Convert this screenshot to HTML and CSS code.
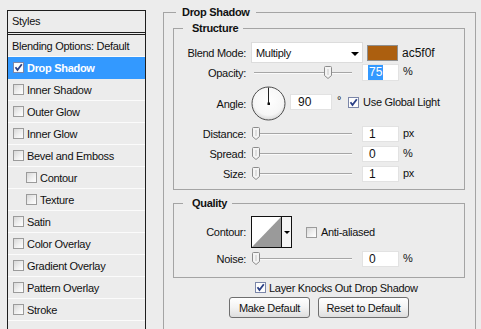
FILE: index.html
```html
<!DOCTYPE html>
<html>
<head>
<meta charset="utf-8">
<link rel="stylesheet" href="styles.css">
</head>
<body>
<div class="app">
  <div class="styles-panel">
    <div class="panel-header">Styles</div>
    <ul class="style-list">
      <li class="item plain">Blending Options: Default</li>
      <li class="item selected"><span class="cb checked"><svg viewBox="0 0 11 11" width="11" height="11"><path d="M2.5 5.2 L4.5 8 L8.8 2.2" fill="none" stroke="#2a3f86" stroke-width="1.8"/></svg></span>Drop Shadow</li>
      <li class="item"><span class="cb"></span>Inner Shadow</li>
      <li class="item"><span class="cb"></span>Outer Glow</li>
      <li class="item"><span class="cb"></span>Inner Glow</li>
      <li class="item"><span class="cb"></span>Bevel and Emboss</li>
      <li class="item sub"><span class="cb"></span>Contour</li>
      <li class="item sub"><span class="cb"></span>Texture</li>
      <li class="item"><span class="cb"></span>Satin</li>
      <li class="item"><span class="cb"></span>Color Overlay</li>
      <li class="item"><span class="cb"></span>Gradient Overlay</li>
      <li class="item"><span class="cb"></span>Pattern Overlay</li>
      <li class="item"><span class="cb"></span>Stroke</li>
    </ul>
  </div>

  <div class="main">
    <fieldset class="group outer">
      <legend class="outer-legend">Drop Shadow</legend>

      <fieldset class="group structure">
        <legend class="sub-legend">Structure</legend>

        <div class="row row-blend">
          <span class="label">Blend Mode:</span>
          <div class="select">
            <span class="select-text">Multiply</span>
            <span class="arrow"></span>
          </div>
          <span class="swatch"></span>
          <span class="hex">ac5f0f</span>
        </div>

        <div class="row row-slider row-opacity">
          <span class="label">Opacity:</span>
          <div class="slider"><span class="track"></span><span class="thumb" style="left:73px"><svg viewBox="0 0 8 13" width="8" height="13"><path d="M1.5 0.5 H6.5 Q7.5 0.5 7.5 1.5 V9.5 L4 12.5 L0.5 9.5 V1.5 Q0.5 0.5 1.5 0.5 Z" fill="#f4f4f4" stroke="#8c8c8c"/><path d="M4 3 V9" stroke="#c8c8c8"/></svg></span></div>
          <div class="num"><span class="hilite">75</span></div>
          <span class="unit">%</span>
        </div>

        <div class="row row-angle">
          <span class="label">Angle:</span>
          <span class="dial"><svg viewBox="0 0 35 35" width="35" height="35"><defs><radialGradient id="dg" cx="50%" cy="40%" r="60%"><stop offset="0" stop-color="#ffffff"/><stop offset="0.75" stop-color="#f6f6f6"/><stop offset="1" stop-color="#d8d8d8"/></radialGradient></defs><circle cx="17.5" cy="17.5" r="16.5" fill="url(#dg)" stroke="#4c4c4c" stroke-width="1"/><line x1="17.5" y1="1.5" x2="17.5" y2="17.5" stroke="#222" stroke-width="1"/><rect x="16.5" y="16.5" width="2.5" height="2.5" fill="#111"/></svg></span>
          <div class="num num-angle">90</div>
          <span class="deg">°</span>
          <span class="cb checked cb-global"><svg viewBox="0 0 11 11" width="11" height="11"><path d="M2.5 5.2 L4.5 8 L8.8 2.2" fill="none" stroke="#2a3f86" stroke-width="1.8"/></svg></span>
          <span class="check-text">Use Global Light</span>
        </div>

        <div class="row row-slider row-distance">
          <span class="label">Distance:</span>
          <div class="slider"><span class="track"></span><span class="thumb" style="left:1px"><svg viewBox="0 0 8 13" width="8" height="13"><path d="M1.5 0.5 H6.5 Q7.5 0.5 7.5 1.5 V9.5 L4 12.5 L0.5 9.5 V1.5 Q0.5 0.5 1.5 0.5 Z" fill="#f4f4f4" stroke="#8c8c8c"/><path d="M4 3 V9" stroke="#c8c8c8"/></svg></span></div>
          <div class="num">1</div>
          <span class="unit">px</span>
        </div>

        <div class="row row-slider row-spread">
          <span class="label">Spread:</span>
          <div class="slider"><span class="track"></span><span class="thumb" style="left:1px"><svg viewBox="0 0 8 13" width="8" height="13"><path d="M1.5 0.5 H6.5 Q7.5 0.5 7.5 1.5 V9.5 L4 12.5 L0.5 9.5 V1.5 Q0.5 0.5 1.5 0.5 Z" fill="#f4f4f4" stroke="#8c8c8c"/><path d="M4 3 V9" stroke="#c8c8c8"/></svg></span></div>
          <div class="num">0</div>
          <span class="unit">%</span>
        </div>

        <div class="row row-slider row-size">
          <span class="label">Size:</span>
          <div class="slider"><span class="track"></span><span class="thumb" style="left:1px"><svg viewBox="0 0 8 13" width="8" height="13"><path d="M1.5 0.5 H6.5 Q7.5 0.5 7.5 1.5 V9.5 L4 12.5 L0.5 9.5 V1.5 Q0.5 0.5 1.5 0.5 Z" fill="#f4f4f4" stroke="#8c8c8c"/><path d="M4 3 V9" stroke="#c8c8c8"/></svg></span></div>
          <div class="num">1</div>
          <span class="unit">px</span>
        </div>
      </fieldset>

      <fieldset class="group quality">
        <legend class="sub-legend">Quality</legend>

        <div class="row row-contour">
          <span class="label">Contour:</span>
          <div class="contour">
            <span class="contour-preview"><svg viewBox="0 0 29 30" width="29" height="30"><rect width="29" height="30" fill="#fff"/><polygon points="0,30 29,0 29,30" fill="#9a9a9a"/></svg></span>
            <span class="contour-drop"><span class="arrow small"></span></span>
          </div>
          <span class="cb cb-aa"></span>
          <span class="check-text">Anti-aliased</span>
        </div>

        <div class="row row-slider row-noise">
          <span class="label">Noise:</span>
          <div class="slider"><span class="track"></span><span class="thumb" style="left:1px"><svg viewBox="0 0 8 13" width="8" height="13"><path d="M1.5 0.5 H6.5 Q7.5 0.5 7.5 1.5 V9.5 L4 12.5 L0.5 9.5 V1.5 Q0.5 0.5 1.5 0.5 Z" fill="#f4f4f4" stroke="#8c8c8c"/><path d="M4 3 V9" stroke="#c8c8c8"/></svg></span></div>
          <div class="num">0</div>
          <span class="unit">%</span>
        </div>
      </fieldset>

      <div class="knock-row">
        <span class="cb checked"><svg viewBox="0 0 11 11" width="11" height="11"><path d="M2.5 5.2 L4.5 8 L8.8 2.2" fill="none" stroke="#2a3f86" stroke-width="1.8"/></svg></span>
        <span class="check-text">Layer Knocks Out Drop Shadow</span>
      </div>

      <div class="buttons">
        <button class="btn btn-make">Make Default</button>
        <button class="btn btn-reset">Reset to Default</button>
      </div>
    </fieldset>
  </div>
</div>
</body>
</html>
```

FILE: styles.css
```css
html, body {
  margin: 0;
  padding: 0;
  background: #ececec;
  overflow: hidden;
}
body {
  width: 481px;
  height: 329px;
  font-family: "Liberation Sans", Arial, sans-serif;
  font-size: 11px;
  letter-spacing: -0.3px;
  color: #111;
}
.app {
  display: flex;
  align-items: flex-start;
  padding-left: 7px;
}

/* left list */
.styles-panel {
  margin-top: 10px;
  width: 139px;
  box-sizing: border-box;
  height: 330px;
  border: 1px solid #1e1e1e;
  border-bottom: none;
  background: #ececec;
}
.panel-header {
  height: 21px;
  line-height: 21px;
  padding-left: 4px;
  border-bottom: 3px double #1e1e1e;
}
.style-list {
  list-style: none;
  margin: 0;
  padding: 0;
}
.item {
  height: 21px;
  border-bottom: 1px solid #fbfbfb;
  display: flex;
  align-items: center;
  padding-left: 5px;
  white-space: nowrap;
}
.item.plain { padding-left: 4px; }
.item.sub { padding-left: 18px; }
.item.selected {
  background: #3399ff;
  color: #fff;
  font-weight: bold;
  border-bottom-color: #3399ff;
}
.item .cb { margin-right: 3px; }

/* checkbox */
.cb {
  width: 11px;
  height: 11px;
  box-sizing: border-box;
  border: 1px solid #9b9b9b;
  background: linear-gradient(135deg, #d8d8d8 0%, #f2f2f2 60%, #ffffff 100%);
  display: inline-block;
  flex: none;
  position: relative;
}
.cb.checked {
  background: #fdfdfd;
  border-color: #7b86a8;
}
.cb svg {
  position: absolute;
  left: -1px;
  top: -1px;
}

/* right side */
.main {
  margin-left: 17px;
  margin-top: 6px;
}
.group {
  margin: 0;
  border: 1px solid #a4a4a4;
  min-width: 0;
}
.outer {
  width: 313px;
  height: 340px;
  box-sizing: border-box;
  padding: 0 10px 0 9px;
  border-bottom: none;
}
.outer-legend {
  font-weight: bold;
  line-height: 13px;
  padding: 0 6px;
  margin-left: 3px;
}
.sub-legend {
  font-weight: bold;
  line-height: 13px;
  padding: 0 5px 0 9px;
  margin-left: 9px;
}
.structure {
  margin-top: 3px;
  padding: 7px 0 7px 0;
}
.quality {
  margin-top: 7px;
  padding: 6px 0 10px 0;
}
.row {
  display: flex;
  align-items: center;
  white-space: nowrap;
}
.label {
  width: 72px;
  text-align: right;
  margin-right: 5px;
  flex: none;
}
.row-blend { height: 21px; }
.row-opacity { height: 17px; margin-top: 1px; }
.row-angle { height: 35px; margin-top: 5px; }
.row-distance { height: 16px; margin-top: 5px; }
.row-spread, .row-size { height: 16px; margin-top: 4px; }
.row-contour { height: 32px; }
.row-noise { height: 16px; margin-top: 3px; }

.select {
  width: 112px;
  height: 21px;
  box-sizing: border-box;
  border: 1px solid #dcdcdc;
  background: #fff;
  display: flex;
  align-items: center;
  padding-left: 4px;
  flex: none;
}
.select-text { flex: 1; }
.arrow {
  width: 0;
  height: 0;
  border-left: 4px solid transparent;
  border-right: 4px solid transparent;
  border-top: 4px solid #000;
  margin-right: 3px;
  margin-top: 2px;
}
.arrow.small {
  border-left-width: 3px;
  border-right-width: 3px;
  border-top-width: 3px;
  margin: 0;
}
.swatch {
  width: 31px;
  height: 16px;
  box-sizing: border-box;
  margin-left: 4px;
  background: #ac5f0f;
  border: 1px solid #8f8f8f;
  flex: none;
}
.hex {
  margin-left: 4px;
  font-size: 12px;
  letter-spacing: 0;
}

.slider {
  width: 105px;
  height: 14px;
  position: relative;
  flex: none;
}
.track {
  position: absolute;
  left: 3px;
  right: 4px;
  top: 6px;
  height: 1px;
  background: #a6a6a6;
  border-bottom: 1px solid #fafafa;
}
.thumb {
  position: absolute;
  top: 0;
  width: 8px;
  height: 13px;
  display: block;
}
.thumb svg { display: block; }
.num {
  width: 37px;
  height: 16px;
  box-sizing: border-box;
  margin-left: 6px;
  background: #fff;
  border: 1px solid #e2e2e2;
  line-height: 14px;
  padding-left: 6px;
  font-size: 12px;
  letter-spacing: 0;
  flex: none;
}
.row-opacity .num { height: 17px; line-height: 15px; padding-left: 5px; }
.hilite {
  background: #3399ff;
  color: #fff;
  padding: 0 1px;
  display: inline-block;
  line-height: 15px;
}
.unit {
  margin-left: 4px;
  font-size: 11px;
  align-self: flex-start;
  margin-top: 1px;
}
.dial {
  width: 35px;
  height: 35px;
  flex: none;
  display: block;
}
.dial svg { display: block; }
.num-angle {
  width: 42px;
  margin-left: 4px;
  padding-left: 7px;
  margin-top: -3px;
}
.deg {
  margin-left: 5px;
  align-self: flex-start;
  margin-top: 8px;
  font-size: 11px;
}
.cb-global {
  margin-left: 7px;
  margin-top: -3px;
}
.check-text {
  margin-left: 4px;
}
.row-angle .check-text { margin-top: -3px; }

.contour {
  width: 41px;
  height: 32px;
  box-sizing: border-box;
  border: 1px solid #111;
  display: flex;
  flex: none;
  background: #fff;
}
.contour-preview {
  width: 29px;
  height: 30px;
  display: block;
}
.contour-preview svg { display: block; }
.contour-drop {
  flex: 1;
  border-left: 1px solid #111;
  display: flex;
  align-items: center;
  justify-content: center;
  background: #f4f4f4;
}
.cb-aa { margin-left: 14px; }

.knock-row {
  margin-top: 3px;
  margin-left: 82px;
  height: 13px;
  display: flex;
  align-items: center;
  white-space: nowrap;
}
.knock-row .check-text { margin-left: 3px; }

.buttons {
  margin-top: 3px;
  margin-left: 56px;
  display: flex;
  gap: 8px;
}
.btn {
  height: 21px;
  box-sizing: border-box;
  border: 1px solid #6f6f6f;
  border-radius: 3px;
  background: linear-gradient(#ffffff 0%, #f3f3f3 50%, #dedede 100%);
  font-family: "Liberation Sans", Arial, sans-serif;
  font-size: 11px;
  letter-spacing: -0.3px;
  color: #111;
  padding: 0;
  margin: 0;
}
.btn-make { width: 81px; }
.btn-reset { width: 91px; }
```
